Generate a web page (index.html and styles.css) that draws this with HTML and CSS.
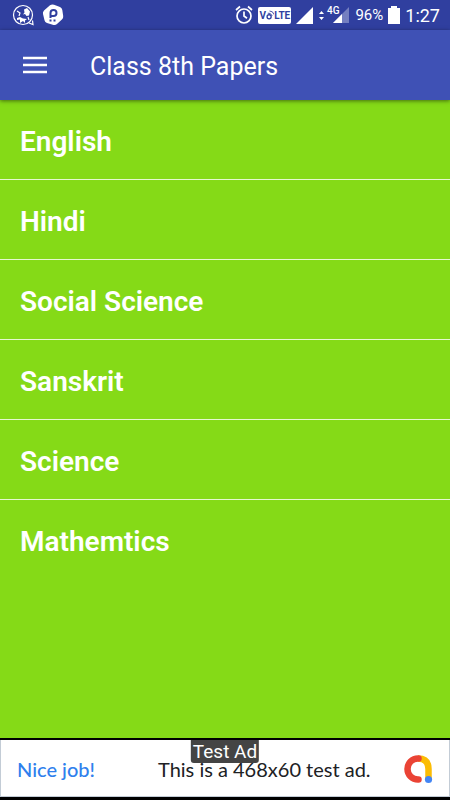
FILE: index.html
```html
<!DOCTYPE html>
<html lang="en">
<head>
<meta charset="utf-8">
<meta name="viewport" content="width=device-width, initial-scale=1">
<title>Class 8th Papers</title>
<link rel="stylesheet" href="styles.css">
</head>
<body>
<div class="screen">
  <div class="status">
    <div class="status-group">
      <svg width="22" height="22" viewBox="0 0 22 22" aria-hidden="true">
        <circle cx="11" cy="11" r="9.500" fill="none" stroke="#fff" stroke-width="1.200"/>
        <path d="M12 5.500 15 4l3 3.500-1 4-2.500.5-1.500-2-2 .5 1.500-2z" fill="#fff"/>
        <path d="M5 14l3-1 3 1.500 4 .5-2 1.500v2.500l-2-2-3 2v-3.500l-3 .5z" fill="#fff"/>
        <path d="M5 7l3 2-1 3M16 13l1 3M17 19l4 1.500-.5-4" fill="none" stroke="#fff" stroke-width="1.200"/>
      </svg>
      <svg width="22" height="22" viewBox="0 0 22 22" aria-hidden="true">
        <path d="M8 1.200Q10 0 12 .8L18 3q2 .8 2.300 3l.9 6q.3 2-1.300 3.500L15 20q-1.500 1.400-3.500.9L5 19q-2-.6-2.500-2.700L1 10q-.5-2 1-3.500z" fill="#fff"/>
        <path d="M8.500 14V9q0-3 3-3t3 3-3 3h-2" fill="none" stroke="#303f9f" stroke-width="2"/>
        <path d="M7.500 16.500h2M11.500 16.500h2" stroke="#303f9f" stroke-width="1.800"/>
      </svg>
    </div>
    <div class="status-group status-right">
      <svg width="18" height="20" viewBox="0 0 18 20" fill="none" stroke="#fff" stroke-width="1.700" aria-hidden="true">
        <circle cx="9" cy="11" r="7"/><path d="M9 6.500V11l3 2.200M1 5l4-3.500M17 5l-4-3.500"/>
      </svg>
      <span class="volte">V<svg width="8" height="14" viewBox="0 0 9 14" fill="none" stroke="#303f9f" aria-hidden="true"><circle cx="3.500" cy="9" r="2.300" stroke-width="1.500"/><path d="M2 5q3-1 5 3M4 2.500q4 0 5 4"/></svg>LTE</span>
      <svg width="17" height="17" viewBox="0 0 17 17" aria-hidden="true"><path d="M17 0v17H0z" fill="#fff"/></svg>
      <svg class="mobile" width="32" height="20" viewBox="0 0 32 20" aria-hidden="true">
        <path d="M1 11 3.500 8 6 11zM1 14h5l-2.500 3z" fill="#fff"/>
        <path d="M31 4v16H15z" fill="#747fc0"/>
        <path d="M24 11v9h-9z" fill="#fff"/>
        <text x="9" y="11" class="network">4G</text>
      </svg>
      <span class="percent">96%</span>
      <svg width="12" height="18" viewBox="0 0 12 18" aria-hidden="true"><path d="M3 0h6v2h3v16H0V2h3z" fill="#fff"/></svg>
      <span class="clock">1:27</span>
    </div>
  </div>
  <header class="bar">
    <button class="menu" type="button" aria-label="Menu">
      <svg width="24" height="18" viewBox="0 0 24 18" aria-hidden="true"><path d="M0 2h24M0 9h24M0 16h24" stroke="#fff" stroke-width="2.400"/></svg>
    </button>
    <h1>Class 8th Papers</h1>
  </header>
  <main>
    <ul class="subjects">
      <li><a href="#english">English</a></li>
      <li><a href="#hindi">Hindi</a></li>
      <li><a href="#social-science">Social Science</a></li>
      <li><a href="#sanskrit">Sanskrit</a></li>
      <li><a href="#science">Science</a></li>
      <li><a href="#mathematics">Mathemtics</a></li>
    </ul>
  </main>
  <aside class="ad">
    <span class="praise">Nice job!</span>
    <span class="message">This is a 468x60 test ad.</span>
    <svg class="logo" width="30" height="30" viewBox="0 0 30 30" fill="none" aria-hidden="true">
      <path d="M15 4.500Q25.500 4.500 25.500 15v10" stroke="#fbbc04" stroke-width="6.500"/>
      <path d="M15.500 4.500H15a10.500 10.500 0 0 0 0 21h.5" stroke="#ea4335" stroke-width="6.500" stroke-linecap="round"/>
      <circle cx="25.500" cy="25.500" r="3.600" fill="#4285f4"/>
    </svg>
    <span class="tag">Test Ad</span>
  </aside>
</div>
</body>
</html>
```
FILE: styles.css
```css
* { box-sizing: border-box; }
body {
  margin: 0;
  font-family: Roboto, sans-serif;
  color: #fff;
  background: #85da17;
}
svg { flex: none; display: block; }
.screen {
  display: flex;
  flex-direction: column;
  min-height: 100vh;
}
.status {
  display: flex;
  justify-content: space-between;
  height: 30px;
  padding: 0 10px 0 12px;
  background: #303f9f;
}
.status-group {
  display: flex;
  align-items: center;
  gap: 8px;
}
.status-right { gap: 5px; }
.volte {
  display: flex;
  align-items: center;
  justify-content: center;
  width: 33px;
  height: 17px;
  border-radius: 2px;
  background: #fff;
  color: #303f9f;
  font-size: 10px;
  font-weight: 700;
}
.mobile { margin-top: -4px; }
.network {
  fill: #fff;
  font-size: 10px;
  font-weight: 500;
}
.percent { font-size: 15px; }
.clock { font-size: 18px; }
.bar {
  position: relative;
  display: flex;
  align-items: center;
  gap: 43px;
  height: 70px;
  padding: 0 23px;
  background: #3f51b5;
  box-shadow: 0 1px 4px rgba(0, 0, 0, .5);
}
.menu {
  padding: 0;
  border: 0;
  background: none;
}
h1 {
  margin: 2px 0 0;
  font-size: 25px;
  font-weight: 400;
}
main { flex: 1; }
.subjects {
  margin: 0;
  padding: 0;
  list-style: none;
}
.subjects a {
  display: flex;
  align-items: center;
  height: 80px;
  padding: 4px 20px 0;
  border-bottom: 1px solid #e6f8d0;
  color: #fff;
  font-size: 28px;
  font-weight: 600;
  text-decoration: none;
}
.subjects li:last-child a { border-color: transparent; }
.ad {
  position: relative;
  display: flex;
  align-items: center;
  height: 62px;
  padding: 0 17px;
  border: solid #000;
  border-width: 2px 0 3px;
  background: #fff;
  box-shadow: inset 1px -1px #c3ccd6, inset -1px 0 #c3ccd6;
  color: #202124;
  font-family: Lato, sans-serif;
  font-size: 20px;
}
.praise {
  color: #2f80ed;
  font-weight: 500;
}
.message { margin-left: 63px; }
.logo { margin-left: auto; }
.tag {
  position: absolute;
  top: 0;
  left: 50%;
  transform: translateX(-50%);
  padding: 0 2px;
  border-radius: 0 0 3px 3px;
  background: #444;
  color: #fff;
  font-family: Roboto, sans-serif;
  font-size: 19px;
  line-height: 23px;
  white-space: nowrap;
}
```
